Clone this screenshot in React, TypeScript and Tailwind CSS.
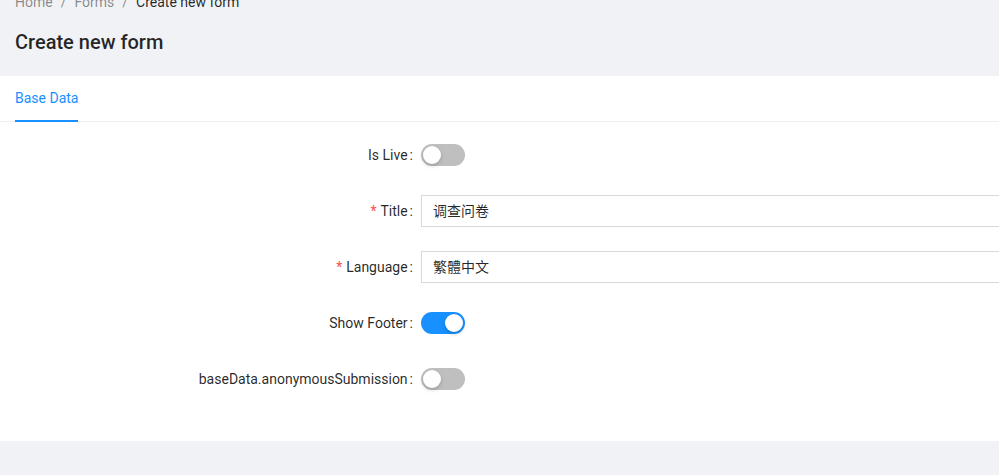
import React from 'react';

const font = { fontFamily: 'Roboto, "Noto Sans CJK SC", sans-serif' };

function Switch({ on }: { on?: boolean }) {
  return (
    <div
      className={`relative h-[22px] w-[44px] rounded-full ${on ? 'bg-[#1890ff]' : 'bg-[#bfbfbf]'}`}
    >
      <div
        className={`absolute top-[2px] h-[18px] w-[18px] rounded-full bg-white shadow-[0_2px_4px_rgba(0,35,11,0.2)] ${
          on ? 'left-[24px]' : 'left-[2px]'
        }`}
      />
    </div>
  );
}

function FormRow({
  label,
  required,
  children,
}: {
  label: string;
  required?: boolean;
  children: React.ReactNode;
}) {
  return (
    <div className="flex h-[32px] items-center">
      <div className="flex w-[421px] shrink-0 items-center justify-end text-[14px] text-[rgba(0,0,0,0.85)]">
        {required && <span className="mr-[4px] text-[#ff4d4f]">*</span>}
        <span>{label}</span>
        <span className="ml-[2px] mr-[8px]">:</span>
      </div>
      <div className="flex flex-1 items-center">{children}</div>
    </div>
  );
}

function TextInput({ value }: { value: string }) {
  return (
    <div className="flex h-[32px] w-full items-center border border-r-0 border-[#d9d9d9] bg-white px-[11px] text-[14px] text-[rgba(0,0,0,0.85)]">
      {value}
    </div>
  );
}

export default function App() {
  return (
    <div className="h-[475px] overflow-hidden bg-[#f0f2f5]" style={font}>
      {/* page header, scrolled a bit so the breadcrumb is cut */}
      <div className="-mt-[9px] px-[15px] pb-[20px]">
        <div className="flex h-[22px] items-center gap-[8px] text-[14px] text-[rgba(0,0,0,0.45)]">
          <span>Home</span>
          <span>/</span>
          <span>Forms</span>
          <span>/</span>
          <span className="text-[rgba(0,0,0,0.85)]">Create new form</span>
        </div>
        <h1 className="mt-[15px] text-[20px] leading-[28px] font-medium text-[rgba(0,0,0,0.85)]">
          Create new form
        </h1>
      </div>

      <div className="h-[365px] bg-white">
        <div className="flex h-[46px] border-b border-[#f0f0f0] px-[15px]">
          <div className="relative flex items-center text-[14px] text-[#1890ff]">
            Base Data
            <div className="absolute right-0 -bottom-[1px] left-0 h-[2px] bg-[#1890ff]" />
          </div>
        </div>

        <div className="flex flex-col gap-[24px] pt-[17px]">
          <FormRow label="Is Live">
            <Switch />
          </FormRow>
          <FormRow label="Title" required>
            <TextInput value="调查问卷" />
          </FormRow>
          <FormRow label="Language" required>
            <TextInput value="繁體中文" />
          </FormRow>
          <FormRow label="Show Footer">
            <Switch on />
          </FormRow>
          <FormRow label="baseData.anonymousSubmission">
            <Switch />
          </FormRow>
        </div>
      </div>
    </div>
  );
}
